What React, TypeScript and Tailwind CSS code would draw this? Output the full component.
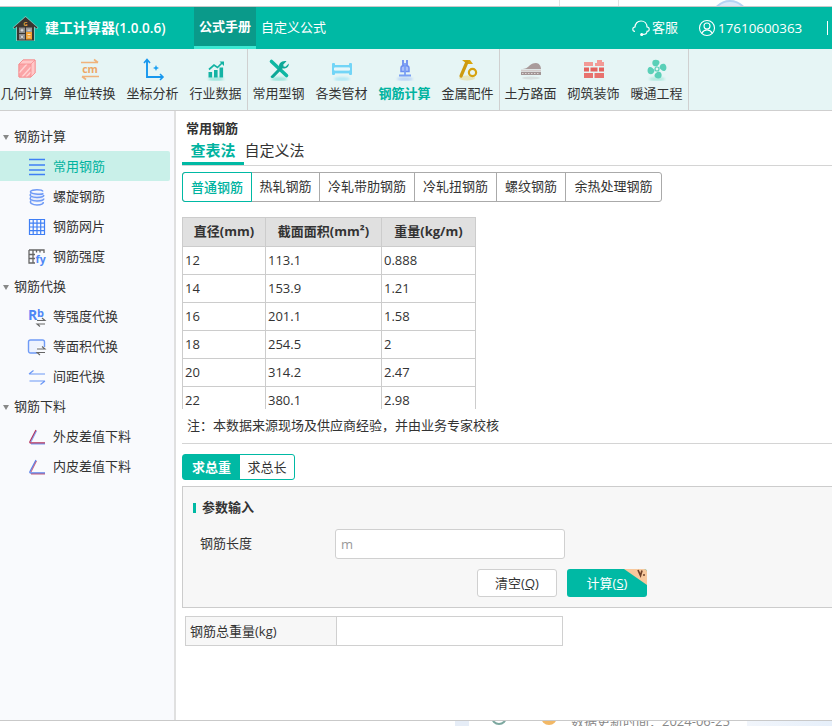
import React from "react";

const FONT = { fontFamily: '"Open Sans","Noto Sans CJK SC",sans-serif' };

function Glow({ color }: { color: string }) {
  return <ellipse cx="12" cy="22" rx="8" ry="2" fill={color} opacity="0.35" filter="url(#gl)" />;
}

const S = ({ children, size = 24 }: { children: React.ReactNode; size?: number }) => (
  <svg width={size} height={size} viewBox="0 0 24 24" fill="none">
    <defs>
      <filter id="gl" x="-50%" y="-100%" width="200%" height="300%">
        <feGaussianBlur stdDeviation="1.2" />
      </filter>
    </defs>
    {children}
  </svg>
);

const IconCube = () => (
  <S>
    <path d="M4 7l4-4h12v13l-4 4H4z" fill="#ffb4b4" stroke="#f58b8b" strokeWidth="1" />
    <path d="M4 7h12v13H4z" fill="#fba5a7" />
    <path d="M4 16l8-9M7 20l9-10M11 20l5-5" stroke="#ffd4d4" strokeWidth="1.4" />
    <path d="M4 7l4-4h12l-4 4zM16 7l4-4v13l-4 4z" fill="#ffc9c9" />
    <path d="M4 7h12v13H4zM16 7l4-4M4 7l4-4h12v13l-4 4" stroke="#f88e90" strokeWidth="0.8" />
  </S>
);
const IconCm = () => (
  <S>
    <path d="M3 5.5h17M16 2.5l4 3" stroke="#f0b27a" strokeWidth="1.6" />
    <text x="12" y="15.5" textAnchor="middle" fontSize="10.5" fontWeight="700" fill="#eda765" fontFamily="Open Sans">cm</text>
    <path d="M21 19.5H4M8 22.5l-4-3" stroke="#f0b27a" strokeWidth="1.6" />
  </S>
);
const IconAxis = () => (
  <S>
    <path d="M6 3v17h16" stroke="#1797ee" strokeWidth="1.9" />
    <path d="M3 6l3-3.5L9 6M19 17l3 3-3 3" stroke="#1797ee" strokeWidth="1.6" />
    <path d="M15 8l.9 2.1L18 11l-2.1.9L15 14l-.9-2.1L12 11l2.1-.9z" fill="#1da1f2" />
  </S>
);
const IconChart = () => (
  <S>
    <Glow color="#14c7ad" />
    <path d="M5 12.5l5-4.5 3.5 2.5L18 6" stroke="#13b3a4" strokeWidth="1.7" />
    <path d="M15.5 4.5h4.5v4.5z" fill="#13b3a4" />
    <rect x="4.5" y="15" width="3.6" height="5.5" fill="#13b3a4" />
    <rect x="10" y="13" width="3.6" height="7.5" fill="#13b3a4" />
    <rect x="15.5" y="10.5" width="3.6" height="10" fill="#13b3a4" />
  </S>
);
const IconTools = () => (
  <S>
    <Glow color="#14c7ad" />
    <path d="M4.5 4.5l15 14" stroke="#0fb8a3" strokeWidth="3.6" strokeLinecap="round" />
    <path d="M19.5 4.2l-3.2 3.3.3 2 2 .3 3.2-3.2c.2 3.2-2.6 5.8-6 4.6L6.8 20.6c-1 1-3 .1-3.2-1.2l8.7-9c-1.2-3.4 2-7 7.2-6.2z" fill="#0da897" />
  </S>
);
const IconTube = () => (
  <S>
    <Glow color="#55d2f5" />
    <rect x="2" y="6" width="3" height="12" rx="1" fill="#72d5f7" />
    <rect x="19" y="6" width="3" height="12" rx="1" fill="#72d5f7" />
    <rect x="4" y="8" width="16" height="2.6" fill="#72d5f7" />
    <rect x="4" y="13.4" width="16" height="3" fill="#72d5f7" />
    <rect x="4" y="10.6" width="16" height="2.8" fill="#e6f7fb" />
  </S>
);
const IconRebar = () => (
  <S>
    <Glow color="#6f9cf5" />
    <path d="M10 3v8M14 3v8" stroke="#6c8ef0" strokeWidth="1.8" />
    <path d="M8 11c0-2 1-2.5 4-2.5s4 .5 4 2.5v3.5H8z" fill="#a9c0f8" stroke="#6c8ef0" strokeWidth="1.5" />
    <path d="M12 6v12M6 18.5h12" stroke="#7aa0f4" strokeWidth="1.8" />
  </S>
);
const IconHammer = () => (
  <S>
    <ellipse cx="11" cy="21" rx="8" ry="2.4" fill="#e6d68a" opacity="0.55" />
    <path d="M6 3l8 0 3 4-6 0z" fill="#d9a50c" />
    <path d="M11 5l-6 14" stroke="#cd9a10" strokeWidth="3.2" strokeLinecap="round" />
    <circle cx="16.5" cy="15.5" r="3.6" stroke="#d6a20f" strokeWidth="2.2" />
  </S>
);
const IconRoad = () => (
  <S>
    <path d="M2 12c5 0 6-1 8-3 2-1.8 4-3 7-3 3 0 5 3 5 6z" fill="#a99b9b" />
    <rect x="2" y="12.6" width="20" height="2" fill="#d3cbcb" />
    <rect x="2" y="15" width="20" height="3" fill="#a39696" />
    <path d="M3 16.5h18" stroke="#e6dcdc" strokeWidth="0.9" strokeDasharray="1.5 1.5" />
    <ellipse cx="12" cy="21" rx="9" ry="1.5" fill="#b8aeae" opacity="0.3" />
  </S>
);
const IconBrick = () => (
  <S>
    <path d="M2 5h9v4H2zM15 3h5v2h2v4H13V6h2z" fill="#f29a96" />
    <path d="M2 10.5h5v4H2zM8.5 10.5h7v4h-7zM17 10.5h5v4h-5z" fill="#e4625e" />
    <path d="M2 16h9v5H2zM12.5 16H22v5h-9.5z" fill="#e8726e" />
  </S>
);
const IconFan = () => (
  <S>
    <Glow color="#4fd6b8" />
    <circle cx="12" cy="12" r="2" stroke="#5ad0b8" strokeWidth="1.2" />
    <path d="M11 9.5C7.5 9.5 6.5 6 8 3.5c2-1.5 6-1 6.5 1.5.3 2-1.5 3-2.5 4.5zM14.5 11c0-3.5 3-5 5.5-3.8 2 1.7 2 5.8-.5 6.8-2 .5-3.6-1.7-5-3zM13 14.5c3.5 0 4.5 3.4 3 6-2 1.6-6 1-6.5-1.5-.3-2 1.5-3 3.5-4.5zM9.5 13c0 3.5-3 5-5.5 3.8-2-1.7-2-5.8.5-6.8 2-.5 3.6 1.7 5 3z" fill="#5ad0b8" />
  </S>
);

const tools = [
  [
    ["几何计算", IconCube],
    ["单位转换", IconCm],
    ["坐标分析", IconAxis],
    ["行业数据", IconChart],
  ],
  [
    ["常用型钢", IconTools],
    ["各类管材", IconTube],
    ["钢筋计算", IconRebar, true],
    ["金属配件", IconHammer],
  ],
  [
    ["土方路面", IconRoad],
    ["砌筑装饰", IconBrick],
    ["暖通工程", IconFan],
  ],
] as [string, React.FC, boolean?][][];

const B = "#3f7ff5";
const Sv = ({ children }: { children: React.ReactNode }) => (
  <svg width="20" height="20" viewBox="0 0 20 20" fill="none">{children}</svg>
);
const SideLines = () => (
  <Sv>
    <path d="M2 2.5h16M2 8h16M2 13h16M2 17.5h16" stroke={B} strokeWidth="1.4" />
  </Sv>
);
const SideCoil = () => (
  <Sv>
    <path d="M4.500 5.500h11v10h-11z" fill="#6f9af6" opacity="0.15" />
    <g stroke="#6f9af6" strokeWidth="1.500" fill="none">
      <path d="M16 4.500C15 2 5 2 3.500 4.500 2.500 7 14 8 16.500 6.500" />
      <path d="M4 6.500C1.500 9 5 10.500 10 10.500s7-1 6.800-2.500" />
      <path d="M4 10C1.500 12.500 5 14 10 14s7-1 6.800-2.500" />
      <path d="M4 13.500C2 16 5.500 18 10 18s6.500-1.300 6.300-3" />
    </g>
  </Sv>
);
const SideGrid = () => (
  <Sv>
    <path d="M2.500 2.500h15v15h-15zM2.500 6.200h15M2.500 10h15M2.500 13.700h15M6.200 2.500v15M10 2.500v15M13.700 2.500v15" stroke={B} strokeWidth="1.2" />
  </Sv>
);
const SideFy = () => (
  <Sv>
    <path d="M2 3h15v3M2 3v13h6M2 7.500h6M2 11.500h6M6 3v13M9.500 3v2.500M13 3v2.500" stroke="#666" strokeWidth="1.3" />
    <text x="8.600" y="16" fontSize="10.500" fontWeight="700" fill="#4f87f6" fontFamily="Open Sans">fy</text>
  </Sv>
);
const SwapSmall = ({ x, y }: { x: number; y: number }) => (
  <path d={`M${x} ${y}h8l-3-2.500M${x + 8} ${y + 3.500}h-8l3 2.500`} stroke="#666" strokeWidth="1.1" fill="none" />
);
const SideRb = () => (
  <Sv>
    <text x="1" y="12.500" fontSize="14" fontWeight="700" fill="#4f87f6" fontFamily="Open Sans">R</text>
    <text x="10" y="10" fontSize="11" fontWeight="700" fill="#4f87f6" fontFamily="Open Sans">b</text>
    <SwapSmall x={10} y={13.500} />
  </Sv>
);
const SideArea = () => (
  <Sv>
    <rect x="1.500" y="3" width="16" height="13" rx="2" fill="#eef3fe" stroke="#6f9af6" strokeWidth="1.400" />
    <rect x="10" y="10" width="9" height="9" fill="#f9fafd" />
    <SwapSmall x={10} y={12} />
  </Sv>
);
const SideArrows = () => (
  <Sv>
    <path d="M2 7h16M6.500 3.500L2 7M18 14H2.500M13.500 17.500l4.500-3.500" stroke="#6c98f6" strokeWidth="1.200" />
  </Sv>
);
const SideAngle = ({ a, b }: { a: string; b: string }) => (
  <Sv>
    <path d="M9 3L3 14.500q-.6 1.500 1 1.500H18" stroke={a} strokeWidth="1.300" />
    <path d="M9.500 4L4 15M4 17h14" stroke={b} strokeWidth="0.900" opacity="0.9" />
  </Sv>
);
const SideAngleA = () => <SideAngle a="#b4345e" b="#5a82ea" />;
const SideAngleB = () => <SideAngle a="#5a82ea" b="#b4345e" />;

const side: [string, [string, React.FC, boolean?][]][] = [
  ["钢筋计算", [["常用钢筋", SideLines, true], ["螺旋钢筋", SideCoil], ["钢筋网片", SideGrid], ["钢筋强度", SideFy]]],
  ["钢筋代换", [["等强度代换", SideRb], ["等面积代换", SideArea], ["间距代换", SideArrows]]],
  ["钢筋下料", [["外皮差值下料", SideAngleA], ["内皮差值下料", SideAngleB]]],
];

const rows = [
  ["12", "113.1", "0.888"],
  ["14", "153.9", "1.21"],
  ["16", "201.1", "1.58"],
  ["18", "254.5", "2"],
  ["20", "314.2", "2.47"],
  ["22", "380.1", "2.98"],
];

const subTabs = [
  ["普通钢筋", "w-[70px]"],
  ["热轧钢筋", "w-[68px]"],
  ["冷轧带肋钢筋", "w-[95px]"],
  ["冷轧扭钢筋", "w-[82px]"],
  ["螺纹钢筋", "w-[69px]"],
  ["余热处理钢筋", "w-[95px]"],
];

export default function App() {
  return (
    <div style={FONT} className="h-[726px] w-[832px] overflow-hidden bg-white flex flex-col text-[13px] text-[#333]">
      {/* strip of the window behind */}
      <div className="h-[7px] shrink-0 border-b border-[#c9c9c9] flex overflow-hidden">
        <div className="ml-[559px] w-[60px] h-full border-x border-[#e3e3e3]" />
        <div className="ml-[92px] w-[38px] h-[38px] rounded-full border-2 border-[#b7d3f3] bg-[#dbe9fa]" />
      </div>

      {/* header */}
      <header className="h-[42px] shrink-0 bg-[#00b9a4] flex items-center text-white">
        <svg className="ml-[12px]" width="27" height="27" viewBox="0 0 27 27">
          <path d="M13.500 1L0.500 12.500l1.600 1.800L4 12.700V26h19V12.700l1.900 1.600 1.600-1.800z" fill="#c9d6d2" opacity="0.6" />
          <path d="M13.500 2L1.500 12.500l1 1.100L5 11.500V25.500h17V11.500l2.500 2.100 1-1.100z" fill="#3a3530" />
          <text x="13.500" y="10.600" fontSize="6" fontWeight="700" fill="#e8a83f" textAnchor="middle" fontFamily="Open Sans">G</text>
          <rect x="7" y="12.500" width="6" height="5.500" fill="#8b8b8b" />
          <rect x="14" y="12.500" width="6" height="5.500" fill="#9a9a9a" />
          <rect x="7" y="19" width="6" height="5.500" fill="#8b8b8b" />
          <rect x="14" y="17" width="6" height="7.500" fill="#f0a030" />
          <path d="M8.500 15.200h3M10 13.800v3M15.500 15.200h3M8.700 20.500l2.600 2.600M11.300 20.500l-2.600 2.600M15.500 19.500h3M15.500 22h3" stroke="#fff" strokeWidth="0.700" />
        </svg>
        <span className="ml-[6px] w-[149px] text-[14px] font-bold leading-none whitespace-nowrap">
          建工计算器<span className="text-[13.5px] font-semibold">(1.0.0.6)</span>
        </span>
        <div className="w-[62px] h-full flex items-center justify-center bg-[#0a9a8a] border-b-[3px] border-[#3ce8d2] font-bold">
          公式手册
        </div>
        <span className="ml-[5px] w-[65px]">自定义公式</span>
        <svg className="ml-[306px]" width="18" height="18" viewBox="0 0 18 18" fill="none" stroke="#fff" strokeWidth="1.100">
          <path d="M3 8.500C3 4.500 5.500 2 9 2s6 2.500 6 6.500" />
          <path d="M3 8a1.600 1.600 0 0 0 0 4.400M15 8a1.600 1.600 0 0 1 0 4.400c0 2-1.600 3-4 3" />
          <circle cx="9.700" cy="15.500" r="1" fill="#fff" />
        </svg>
        <span className="ml-[2px] w-[46px]">客服</span>
        <svg width="18" height="18" viewBox="0 0 18 18" fill="none" stroke="#fff" strokeWidth="1.100">
          <circle cx="9" cy="9" r="7.500" />
          <circle cx="9" cy="7" r="3" />
          <path d="M3.800 14.200c1.200-2.200 3-3.300 5.200-3.300s4 1.100 5.200 3.300" />
        </svg>
        <span className="ml-[2px] text-[13.4px] w-[109px]">17610600363</span>
        <div className="w-px h-[14px] bg-white" />
      </header>

      {/* toolbar */}
      <div className="h-[62px] shrink-0 bg-[#e6f5f5] border-b border-[#cfcfcf] flex">
        {tools.map((g, i) => (
          <div key={i} className={`flex border-r border-[#d0d0d0] ${i === 0 ? "-ml-[5px]" : "-ml-px"}`}>
            {g.map(([label, Icon, active]) => (
              <div key={label} className="w-[63px] flex flex-col items-center pt-[8px]">
                <Icon />
                <span className={`mt-[2px] leading-[20px] whitespace-nowrap ${active ? "font-bold text-[#00b39f]" : ""}`}>{label}</span>
              </div>
            ))}
          </div>
        ))}
      </div>

      <div className="flex flex-1 min-h-0">
        {/* sidebar */}
        <aside className="w-[176px] shrink-0 bg-[#f9fafd] border-r-2 border-[#e0e0e0] pt-[11px] pr-[4px]">
          {side.map(([title, items]) => (
            <div key={title}>
              <div className="h-[30px] flex items-center">
                <span className="ml-[3px] w-0 h-0 border-x-[3.5px] border-x-transparent border-t-[5px] border-t-[#888]" />
                <span className="ml-[5px]">{title}</span>
              </div>
              {items.map(([label, Icon, active]) => (
                <div
                  key={label}
                  className={`h-[30px] flex items-center pl-[27px] rounded-r-[2px] ${active ? "bg-[#c9f0e9] text-[#00b39f] -mt-px mb-px pt-[2px]" : ""}`}
                >
                  <Icon />
                  <span className="ml-[6px]">{label}</span>
                </div>
              ))}
            </div>
          ))}
        </aside>

        {/* main */}
        <main className="flex-1 min-w-0 pl-[6px] flex flex-col">
          <div className="h-[18px] mt-[8px] pl-[4px] text-[13px] font-bold leading-[18px] shrink-0">常用钢筋</div>
          <div className="h-[26px] mt-[2px] flex border-b border-[#d4d4d4] box-content mb-[6px] shrink-0">
            <div className="w-[62px] h-[26px] pt-px border-b-[3px] border-[#00b9a4] text-[#00b39f] font-bold text-[15px] leading-[20px] text-center">查表法</div>
            <div className="text-[15px] pt-px leading-[20px] text-center w-[61px]">自定义法</div>
          </div>

          <div className="flex w-[480px] h-[30px] shrink-0 rounded-[3px] border border-[#aaa] leading-[28px] text-center">
            {subTabs.map(([t, w], i) => (
              <div
                key={t}
                className={`${w} h-[30px] -mt-px ${i === 0 ? "-ml-px border border-[#00b9a4] rounded-l-[3px] text-[#00b39f] font-medium" : i < 5 ? "border-r border-[#aaa]" : ""}`}
              >
                {t}
              </div>
            ))}
          </div>

          <div className="h-[192px] mt-[15px] overflow-hidden shrink-0">
            <table className="w-[293px] table-fixed border-collapse">
              <colgroup>
                <col className="w-[83px]" />
                <col className="w-[116px]" />
                <col className="w-[94px]" />
              </colgroup>
              <thead>
                <tr className="h-[29px] bg-[#e0e0e0] font-bold">
                  <th className="border border-[#ccc] font-bold">直径(mm)</th>
                  <th className="border border-[#ccc] font-bold">截面面积(mm²)</th>
                  <th className="border border-[#ccc] font-bold">重量(kg/m)</th>
                </tr>
              </thead>
              <tbody>
                {rows.map((r) => (
                  <tr key={r[0]} className="h-[28px]">
                    {r.map((c, i) => (
                      <td key={i} className="border border-[#ccc] pl-[2px]">{c}</td>
                    ))}
                  </tr>
                ))}
              </tbody>
            </table>
          </div>

          <div className="h-[35px] leading-[33px] pl-[5px] border-b border-[#d4d4d4] shrink-0">
            注：本数据来源现场及供应商经验，并由业务专家校核
          </div>

          <div className="flex w-[113px] h-[26px] mt-[10px] rounded-[3px] border border-[#00b9a4] leading-[24px] text-center shrink-0">
            <div className="w-[57px] bg-[#00b9a4] text-white font-bold">求总重</div>
            <div className="flex-1">求总长</div>
          </div>

          <section className="mt-[6px] h-[122px] border border-[#ccc] border-r-0 bg-[#f7f7f7] shrink-0 flex flex-col">
            <div className="h-[10px] mt-[16px] ml-[10px] flex items-center">
              <span className="w-[3px] h-[10px] bg-[#00b9a4]" />
              <span className="ml-[6px] font-bold text-[#333]">参数输入</span>
            </div>
            <div className="mt-[16px] flex items-center h-[30px] pl-[17px]">
              <span className="w-[135px]">钢筋长度</span>
              <div className="w-[230px] h-[30px] rounded-[3px] border border-[#d0d0d0] bg-white pl-[5px] leading-[28px] text-[#999]">m</div>
            </div>
            <div className="mt-[10px] flex pl-[294px] gap-[10px]">
              <div className="w-[80px] h-[28px] rounded-[3px] border border-[#d0d0d0] bg-white text-center leading-[26px]">
                清空(<span className="underline">Q</span>)
              </div>
              <div className="relative w-[80px] h-[28px] rounded-[3px] bg-[#00b9a4] text-white text-center leading-[28px] overflow-hidden">
                计算(<span className="underline">S</span>)
                <svg className="absolute right-0 top-0" width="23" height="16" viewBox="0 0 23 16">
                  <path d="M0 0h23v16z" fill="#f7c89d" />
                  <path d="M14 1l2.500 5.500L18 1.500M19 6h2" stroke="#6f4028" strokeWidth="1.700" fill="none" />
                </svg>
              </div>
            </div>
          </section>

          <div className="mt-[8px] ml-[3px] w-[378px] h-[30px] border border-[#d0d0d0] flex shrink-0">
            <div className="w-[151px] bg-[#f7f7f7] border-r border-[#d0d0d0] pl-[4px] leading-[28px]">钢筋总重量(kg)</div>
          </div>
        </main>
      </div>

      {/* strip of the window behind */}
      <div className="h-[6px] shrink-0 border-t border-[#c9c9c9] flex overflow-hidden">
        <div className="ml-[455px] w-[14px] bg-[#e6edf7]" />
        <div className="w-[278px] relative overflow-hidden">
          <span className="absolute left-[22px] -top-[12px] w-[16px] h-[16px] rounded-full border-2 border-[#7da8a0]" />
          <span className="absolute left-[72px] -top-[12px] w-[16px] h-[16px] rounded-full bg-[#f2b866]" />
          <span className="absolute left-[102px] -top-[7px] whitespace-nowrap text-[13px] leading-[14px] text-[#888]">数据更新时间：2024-06-25</span>
        </div>
        <div className="flex-1 bg-gradient-to-r from-[#f1f5fb] to-[#e6effa]" />
      </div>
    </div>
  );
}
